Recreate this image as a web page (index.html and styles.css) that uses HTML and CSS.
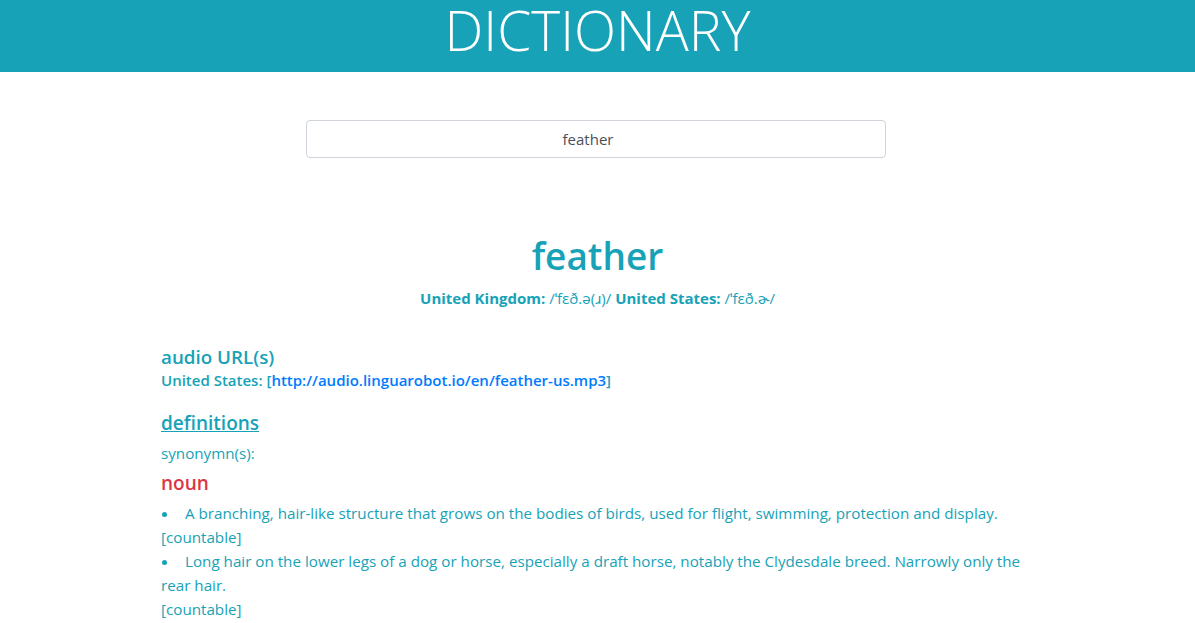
FILE: index.html
```
<!DOCTYPE html>
<html lang="en">
<head>
<meta charset="utf-8">
<title>Dictionary</title>
<link rel="stylesheet" href="styles.css">
</head>
<body>
<header class="topbar">
  <h1 class="brand">DICTIONARY</h1>
</header>
<main class="page">
  <div class="search">
    <input class="search-input" type="text" value="feather">
  </div>
  <section class="entry">
    <h2 class="word">feather</h2>
    <p class="phonetics"><b>United Kingdom:</b> /ˈfɛð.ə(ɹ)/ <b>United States:</b> /ˈfɛð.ɚ/</p>
    <div class="details">
      <h3 class="section-title">audio URL(s)</h3>
      <p class="audio">United States: [<a href="#" class="audio-link">http://audio.linguarobot.io/en/feather-us.mp3</a>]</p>
      <h3 class="section-title defs">definitions</h3>
      <p class="syn">synonymn(s):</p>
      <h4 class="pos">noun</h4>
      <ul class="sense-list">
        <li class="sense">A branching, hair-like structure that grows on the bodies of birds, used for flight, swimming, protection and display.<div class="label">[countable]</div></li>
        <li class="sense">Long hair on the lower legs of a dog or horse, especially a draft horse, notably the Clydesdale breed. Narrowly only the rear hair.<div class="label">[countable]</div></li>
      </ul>
    </div>
  </section>
</main>
</body>
</html>
```
FILE: styles.css
```
* { box-sizing: border-box; }
html, body { margin: 0; padding: 0; }
body {
  font-family: "Open Sans", "Noto Sans", sans-serif;
  font-size: 15.2px;
  line-height: 24px;
  color: #17a2b8;
  background: #fff;
}
.topbar {
  background: #17a2b8;
  height: 72px;
  display: flex;
  justify-content: center;
  align-items: flex-start;
}
.brand {
  margin: 0;
  color: #fff;
  font-weight: 300;
  font-size: 55px;
  line-height: 59px;
}
.page { padding-top: 48px; }
.search { display: flex; justify-content: center; }
.search-input {
  width: 580px;
  height: 38px;
  margin-right: 4px;
  border: 1px solid #ced4da;
  border-radius: 4px;
  text-align: center;
  font-family: inherit;
  font-size: 15px;
  color: #495057;
  padding: 0 15px 0 0;
  outline: none;
}
.entry { margin-top: 74px; }
.word {
  margin: 0;
  text-align: center;
  font-size: 37px;
  font-weight: 600;
  line-height: 48px;
}
.phonetics {
  margin: 6px 0 0;
  text-align: center;
  font-size: 15px;
}
.phonetics b { font-weight: 700; }
.details {
  width: 873px;
  margin: 35px auto 0;
}
.section-title {
  margin: 0;
  font-size: 18.8px;
  font-weight: 600;
  line-height: 24px;
}
.audio {
  margin: 0;
  font-weight: 600;
  font-size: 15px;
  line-height: 22px;
}
.audio-link { color: #007bff; text-decoration: none; }
.defs {
  margin-top: 20px;
  font-size: 19px;
  text-decoration: underline;
}
.syn { margin: 6px 0 0; }
.pos {
  margin: 6px 0 0;
  color: #dc3545;
  font-size: 19px;
  font-weight: 600;
  line-height: 24px;
}
.sense-list {
  list-style: none;
  margin: 6px 0 0;
  padding: 0;
}
.sense::before {
  content: "";
  display: inline-block;
  width: 5px;
  height: 5px;
  border-radius: 50%;
  background: #17a2b8;
  margin: 0 18px 0 1px;
  vertical-align: middle;
}
```
